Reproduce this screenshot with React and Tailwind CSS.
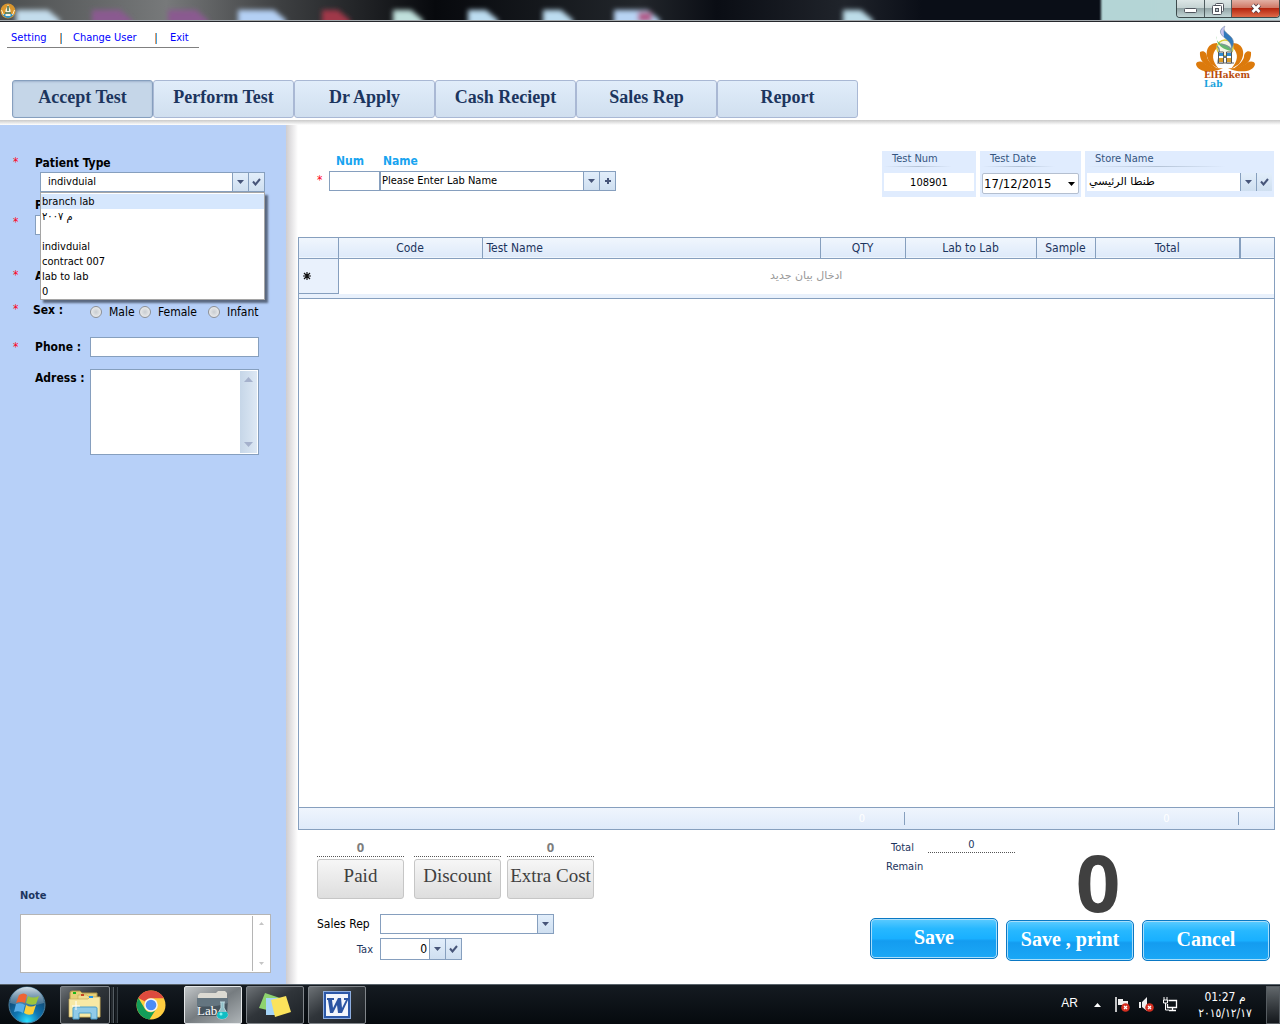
import React from "react";

const TABS = ["Accept Test", "Perform Test", "Dr Apply", "Cash Reciept", "Sales Rep", "Report"];
const PATIENT_TYPES = ["branch lab", "م ٢٠٠٧", "", "indivduial", "contract 007", "lab to lab", "0"];

function ArrowIcon() {
  return (
    <svg width="7" height="4" viewBox="0 0 7 4" aria-hidden="true">
      <path d="M0 0h7L3.5 4z" fill="#475579" />
    </svg>
  );
}

function CheckIcon() {
  return (
    <svg width="9" height="8" viewBox="0 0 9 8" aria-hidden="true">
      <path d="M1 3.5 3.5 6.5 8 1" fill="none" stroke="#475579" strokeWidth="2" />
    </svg>
  );
}

function PlusIcon() {
  return (
    <svg width="6" height="6" viewBox="0 0 6 6" aria-hidden="true">
      <path d="M2 0h2v2h2v2H4v2H2V4H0V2h2z" fill="#475579" />
    </svg>
  );
}

function SideButton({ label, children }) {
  return (
    <button
      type="button"
      aria-label={label}
      className="flex w-4 shrink-0 items-center justify-center border-l border-[#869fbe] bg-linear-to-b from-[#e2eefb] to-[#cfdff0]"
    >
      {children}
    </button>
  );
}

function Star() {
  return <span className="text-[12px] leading-[14px] text-[#ff0020]">*</span>;
}

function TitleBar() {
  const blobs = [
    [16, 44, "#c3dcec"],
    [92, 40, "#8a5a90"],
    [168, 40, "#8a5a90"],
    [238, 48, "#b4d0f4"],
    [322, 28, "#a03848"],
    [393, 30, "#c0e0dc"],
    [468, 30, "#bcdcf0"],
    [543, 30, "#bcdcf0"],
    [614, 46, "#b8d4f4"],
    [843, 30, "#bcdce8"],
  ];
  return (
    <div className="relative flex h-[22px] items-start justify-between overflow-hidden border-b border-[#26282c] bg-[#0b0f16]">
      <svg className="absolute inset-0 h-full w-full" aria-hidden="true">
        <defs>
          <linearGradient id="glass" x1="0" x2="1">
            <stop offset="0" stopColor="#4c4f50" />
            <stop offset="0.13" stopColor="#77797a" />
            <stop offset="0.22" stopColor="#3d3f41" />
            <stop offset="0.34" stopColor="#07090d" />
            <stop offset="0.5" stopColor="#22262b" />
            <stop offset="0.56" stopColor="#0a0d14" />
            <stop offset="0.66" stopColor="#20242b" />
            <stop offset="0.72" stopColor="#0a0e17" />
            <stop offset="1" stopColor="#0a0e17" />
          </linearGradient>
          <linearGradient id="aqua" x1="0" x2="1">
            <stop offset="0" stopColor="#b4d5d6" />
            <stop offset="1" stopColor="#c8dfdf" />
          </linearGradient>
          <filter id="soft" x="-5%" y="-100%" width="110%" height="300%">
            <feGaussianBlur stdDeviation="2.500" />
          </filter>
          <filter id="soft1">
            <feGaussianBlur stdDeviation="1" />
          </filter>
        </defs>
        <rect width="100%" height="22" fill="url(#glass)" />
        <g filter="url(#soft)">
          {blobs.map(([x, w, c]) => (
            <path key={x} d={`M${x} 10h${w - 12}l12 10v10H${x}z`} fill={c} />
          ))}
          <rect x="638" y="12" width="14" height="10" fill="#b05a8a" />
        </g>
        <rect x="1101" y="-4" width="100%" height="30" fill="url(#aqua)" filter="url(#soft1)" />
        <rect y="20" width="100%" height="1" fill="#a4aaae" />
      </svg>
      <svg className="relative mt-[3px]" width="16" height="16" viewBox="0 0 16 16" role="img" aria-label="ElHakem Lab">
        <circle cx="8" cy="8" r="7.500" fill="#d9962e" />
        <path d="M2 11q6 8 12 0z" fill="#2f93c8" />
        <path d="M8 1.500 5.500 7v6h5V7z" fill="#f4f1e0" />
        <path d="M8 3v5M5 10h6" stroke="#3a6a48" strokeWidth="1.500" />
        <path d="M1.500 7l2 5M14.500 7l-2 5" stroke="#fff0c8" />
      </svg>
      <div className="relative flex h-[18px] overflow-hidden rounded-b-[4px] border border-t-0 border-[#3c4a4c]">
        <button type="button" aria-label="Minimize" className="flex w-7 items-center justify-center border-r border-[#4f5d60] bg-[linear-gradient(#dce6e6,#c4d2d2_48%,#93a5a7_50%,#c3d6d6)]">
          <svg className="mt-1" width="13" height="5" viewBox="0 0 13 5"><rect x="0.500" y="0.500" width="12" height="4" rx="1" fill="#fff" stroke="#50555e" /></svg>
        </button>
        <button type="button" aria-label="Restore" className="flex w-[27px] items-center justify-center border-r border-[#4f5d60] bg-[linear-gradient(#dce6e6,#c4d2d2_48%,#93a5a7_50%,#c3d6d6)]">
          <svg width="13" height="12" viewBox="0 0 13 12">
            <rect x="3.500" y="0.500" width="8" height="8" rx="1" fill="#fff" stroke="#50555e" />
            <rect x="0.500" y="2.500" width="9" height="9" rx="1" fill="#fff" stroke="#50555e" />
            <rect x="3.500" y="5.500" width="3" height="3" fill="#b9c6c8" stroke="#50555e" />
          </svg>
        </button>
        <button type="button" aria-label="Close" className="flex w-[47px] items-center justify-center bg-[linear-gradient(#e2b0a4,#cf7562_48%,#b5260f_50%,#dd6a48)]">
          <svg width="12" height="11" viewBox="0 0 12 11">
            <path d="M2.500 2l7 7M9.500 2l-7 7" stroke="#5a4048" strokeWidth="4.500" />
            <path d="M2.500 2l7 7M9.500 2l-7 7" stroke="#fff" strokeWidth="2.600" />
          </svg>
        </button>
      </div>
    </div>
  );
}

function Logo() {
  return (
    <svg width="64" height="66" viewBox="0 0 64 66" role="img" aria-label="ElHakem Lab logo">
      <g fill="#dc7a0c">
        <path d="M23 20C13 20 9 31 17 41l8 5C18 38 17 31 23 25z" />
        <path d="M39 20c10 0 14 11 6 21l-8 5c7-8 8-15 2-21z" />
        <path d="M6 29c4-2 7 1 7 5 1 4 5 8 11 12C14 45 5 40 6 29z" />
        <path d="M57 29c-4-2-7 1-7 5-1 4-5 8-11 12 10-1 19-6 18-17z" />
        <path d="M2 41c1-3 5-3 8-1 5 4 10 6 19 5-9 5-26 5-27-4z" />
        <path d="M61 41c-1-3-5-3-8-1-5 4-10 6-19 5 9 5 26 5 27-4z" />
      </g>
      <path d="M23 40h17" stroke="#666" />
      <circle cx="31" cy="25" r="8" fill="#f6f5e4" stroke="#d9ce3a" strokeWidth="1.500" />
      <path d="M31 3c-8 5-4 9 1 13s6 7 5 11c4-7 3-11-2-15s-6-6-4-9z" fill="#3179bb" stroke="#85909f" strokeWidth="0.600" />
      <path d="M31 3c-6 4-5 8-1 11 0-4-1-7 1-11z" fill="#c6c2ed" />
      <path d="M23 13c-2 5 3 8 8 9s6 3 7 6c-8-1-17-6-15-15z" fill="#64b86d" />
      <path d="M23 23c3 2 3 8 1 16M27 21c6 1 10 3 11 8" fill="none" stroke="#7c9a94" strokeWidth="1.500" />
      <path d="M24.500 29h5v11h-5zM32.500 29h5v11h-5z" fill="#fff" stroke="#555" />
      <path d="M25 30h4v3h-4zM33 30h4v3h-4z" fill="#2d8bd0" />
      <path d="M25 35h4v4h-4zM33 35h4v4h-4z" fill="#d99b28" />
      <path d="M29 34h4" stroke="#68707a" strokeWidth="2" />
      <text x="10" y="55" fontSize="9" fontWeight="bold" fill="#b94b0a" fontFamily="DejaVu Serif, serif">ElHakem</text>
      <text x="10" y="64" fontSize="9" fontWeight="bold" fill="#18a2dc" fontFamily="DejaVu Serif, serif">Lab</text>
    </svg>
  );
}

function Header() {
  return (
    <header className="flex shrink-0 flex-col bg-white">
      <div className="flex items-start justify-between pr-[22px] pb-[2px] pl-[7px]">
        <div>
          <nav className="mt-2 flex h-[18px] w-[192px] items-center border-b border-[#808080] pl-1 text-[11px] text-[#0000ff]">
            <a href="#setting" className="w-[49px]">Setting</a>
            <span className="h-[11px] w-[2px] border-l border-[#e69a64] bg-[#4aa3dd]" />
            <a href="#user" className="ml-[11px] w-[82px] whitespace-nowrap">Change User</a>
            <span className="h-[11px] w-[2px] border-l border-[#e69a64] bg-[#4aa3dd]" />
            <a href="#exit" className="ml-[13px]">Exit</a>
          </nav>
          <div className="mt-8 ml-[5px] flex">
            {TABS.map((t, i) => (
              <button
                key={t}
                type="button"
                className={
                  "h-[38px] w-[141px] rounded-[3px] border pb-1 font-['Liberation_Serif',serif] text-[18px] font-bold text-[#1c355e] " +
                  (i === 0
                    ? "border-[#869fbe] bg-[#c5d6e8] shadow-[inset_0_1px_2px_#9fb4cd]"
                    : "border-[#a9b8d4] bg-linear-to-b from-[#e1edfa] to-[#d0dfef]")
                }
              >
                {t}
              </button>
            ))}
          </div>
        </div>
        <div className="mt-px">
          <Logo />
        </div>
      </div>
      <div className="h-[5px] bg-linear-to-b from-[#cacaca] to-white" />
    </header>
  );
}

function Sidebar() {
  return (
    <aside className="flex w-[286px] shrink-0 flex-col bg-[#b7d0f8] pb-[11px] text-[12px] text-black">
      <div className="mt-[30px] grid grid-cols-[22px_1fr] pl-[13px]">
        <Star />
        <label htmlFor="ptype" className="leading-4 font-bold">Patient Type</label>
      </div>
      <div className="relative mt-px ml-10 w-[225px]">
        <div className="flex h-5 border border-[#869fbe] bg-white">
          <select id="ptype" defaultValue="indivduial" className="min-w-0 flex-1 appearance-none pl-[7px] text-[11px] outline-none">
            {PATIENT_TYPES.map((p) => (
              <option key={p}>{p}</option>
            ))}
          </select>
          <SideButton label="Open patient types"><ArrowIcon /></SideButton>
          <SideButton label="Confirm patient type"><CheckIcon /></SideButton>
        </div>
        <ul role="listbox" aria-label="Patient types" className="absolute top-5 left-0 z-10 w-full border border-[#a5a5a5] bg-white pt-px text-[11px] shadow-[3px_3px_2px_#5a6880]">
          {PATIENT_TYPES.map((p, i) => (
            <li key={p} role="option" aria-selected={i === 0} className={"h-[15px] px-px leading-[15px] " + (i === 0 ? "bg-[#d6e7fd]" : "")}>
              {p}
            </li>
          ))}
        </ul>
      </div>
      <label htmlFor="pname" aria-label="Patient" className="mt-[5px] ml-[35px] w-[5px] overflow-hidden leading-4 font-bold">P</label>
      <div className="mt-[2px] grid grid-cols-[22px_200px] pl-[13px]">
        <Star />
        <input id="pname" className="h-5 border border-[#869fbe] bg-white" />
      </div>
      <div className="mt-[33px] grid grid-cols-[22px_5px] pl-[13px]">
        <Star />
        <span className="overflow-hidden leading-4 font-bold">A</span>
      </div>
      <fieldset className="mt-[18px] grid grid-cols-[20px_57px_49px_69px_1fr] pl-[13px] leading-4">
        <Star />
        <span className="font-bold">Sex :</span>
        {["Male", "Female", "Infant"].map((s) => (
          <label key={s} className="flex items-center gap-[7px] pt-[2px]">
            <input type="radio" name="sex" className="size-3 shrink-0 appearance-none rounded-full border border-[#8d9095] bg-radial from-[#c8ccd0] to-[#f6f6f6]" />
            {s}
          </label>
        ))}
      </fieldset>
      <div className="mt-[17px] grid grid-cols-[22px_55px_169px] items-center pl-[13px]">
        <Star />
        <label htmlFor="phone" className="font-bold whitespace-nowrap">Phone :</label>
        <input id="phone" className="h-5 border border-[#869fbe] bg-white" />
      </div>
      <div className="mt-3 grid grid-cols-[55px_169px] pl-[35px]">
        <label htmlFor="adress" className="font-bold whitespace-nowrap">Adress :</label>
        <div className="flex h-[86px] border border-[#869fbe] bg-white p-px">
          <textarea id="adress" className="min-w-0 flex-1 resize-none outline-none" />
          <div className="flex w-[17px] flex-col items-center justify-between bg-linear-to-r from-[#c6d6e8] to-[#dde8f4] py-[6px]">
            <svg width="9" height="5" viewBox="0 0 9 5"><path d="M4.500 0 9 5H0z" fill="#a5b1cc" /></svg>
            <svg width="9" height="5" viewBox="0 0 9 5"><path d="M0 0h9L4.500 5z" fill="#a5b1cc" /></svg>
          </div>
        </div>
      </div>
      <div className="mt-auto ml-5 w-[251px]">
        <label htmlFor="note" className="block text-[11px] leading-4 font-bold text-[#1c355e]">Note</label>
        <div className="mt-[10px] flex h-[59px] border border-[#b5b5b5] bg-white py-px">
          <textarea id="note" className="min-w-0 flex-1 resize-none outline-none" />
          <div className="flex w-[18px] flex-col items-center justify-between border-l border-[#b5b5b5] py-[6px]">
            <svg width="5" height="3" viewBox="0 0 5 3"><path d="M2.500 0 5 3H0z" fill="#c5c5c5" /></svg>
            <svg width="5" height="3" viewBox="0 0 5 3"><path d="M0 0h5L2.500 3z" fill="#c5c5c5" /></svg>
          </div>
        </div>
      </div>
    </aside>
  );
}

function InfoPanel({ id, label, className, children }) {
  return (
    <div className={"h-[46px] bg-[#e0ecfe] px-[2px] " + className}>
      <label htmlFor={id} className="block h-[15px] pl-2 text-[11px] leading-[15px] text-[#35557f]">{label}</label>
      <div className="mb-[6px] h-px w-3/4 bg-linear-to-r from-transparent via-[#b4c3d6] to-transparent" />
      {children}
    </div>
  );
}

function TopForm() {
  return (
    <div className="flex items-start justify-between pr-px">
      <div className="grid grid-cols-[12px_51px_236px] pt-[2px] pl-[19px] text-[11px]">
        <span />
        <label htmlFor="labnum" className="pl-[7px] text-[12px] leading-4 font-bold text-[#18a4f0]">Num</label>
        <label htmlFor="labname" className="pl-[3px] text-[12px] leading-4 font-bold text-[#18a4f0]">Name</label>
        <span className="pt-1"><Star /></span>
        <input id="labnum" className="mt-[2px] h-5 min-w-0 border border-[#869fbe] bg-white" />
        <div className="mt-[2px] flex h-5 border border-[#869fbe] bg-white">
          <select id="labname" className="min-w-0 flex-1 appearance-none pl-px outline-none">
            <option>Please Enter Lab Name</option>
          </select>
          <SideButton label="Open lab names"><ArrowIcon /></SideButton>
          <SideButton label="Add lab"><PlusIcon /></SideButton>
        </div>
      </div>
      <div className="flex gap-1 text-[11px]">
        <InfoPanel id="testnum" label="Test Num" className="w-[94px]">
          <input id="testnum" defaultValue="108901" className="h-[18px] w-full bg-white text-center" />
        </InfoPanel>
        <InfoPanel id="testdate" label="Test Date" className="w-[101px]">
          <div className="flex h-[21px] items-center rounded-[2px] border border-[#b4bfd0] bg-white pr-[3px]">
            <input id="testdate" defaultValue="17/12/2015" className="min-w-0 flex-1 pl-px text-[13px] outline-none" />
            <svg width="7" height="4" viewBox="0 0 7 4" aria-hidden="true"><path d="M0 0h7L3.500 4z" fill="#000" /></svg>
          </div>
        </InfoPanel>
        <InfoPanel id="store" label="Store Name" className="w-[189px]">
          <div className="flex h-[18px]">
            <select id="store" className="min-w-0 flex-1 appearance-none bg-white pl-[2px] font-['DejaVu_Sans',sans-serif] outline-none">
              <option>طنطا الرئيسي</option>
            </select>
            <SideButton label="Open stores"><ArrowIcon /></SideButton>
            <SideButton label="Confirm store"><CheckIcon /></SideButton>
          </div>
        </InfoPanel>
      </div>
    </div>
  );
}

function TestGrid() {
  const th = "border-r border-[#869fbe] p-0 font-normal leading-[18px]";
  return (
    <div className="mt-10 flex flex-1 flex-col border border-[#869fbe] bg-white">
      <table className="w-full table-fixed border-collapse text-[12px] text-[#1c355e]">
        <colgroup>
          <col className="w-[39px]" />
          <col className="w-36" />
          <col />
          <col className="w-[85px]" />
          <col className="w-[131px]" />
          <col className="w-[59px]" />
          <col className="w-[145px]" />
          <col className="w-[34px]" />
        </colgroup>
        <thead>
          <tr className="h-5 border-b border-[#869fbe] bg-linear-to-b from-[#f0f6fd] to-[#deeafa]">
            <th className={th} />
            <th className={th}>Code</th>
            <th className="border-r border-[#869fbe] py-0 pr-0 pl-1 text-left leading-[18px] font-normal">Test Name</th>
            <th className={th}>QTY</th>
            <th className={th}>Lab to Lab</th>
            <th className={th}>Sample</th>
            <th className="border-r-2 border-[#869fbe] p-0 font-normal">Total</th>
            <th />
          </tr>
        </thead>
        <tbody>
          <tr className="h-[35px]">
            <td className="border-r border-b border-[#869fbe] bg-[#e9f1fc] pl-1">
              <svg width="8" height="8" viewBox="0 0 8 8" aria-label="New row">
                <path d="M4 0v8M0 4h8M1 1l6 6M7 1 1 7" stroke="#111" strokeWidth="1.200" />
              </svg>
            </td>
            <td colSpan={7} className="p-0 text-center font-['DejaVu_Sans',sans-serif] text-[11px] text-[#999]">
              ادخال بيان جديد
            </td>
          </tr>
        </tbody>
      </table>
      <div className="h-[5px] border-b border-[#869fbe] bg-[#e9f1fc]" />
      <div className="flex-1" />
      <div className="flex h-[22px] items-center border-t border-[#869fbe] bg-linear-to-b from-[#eff5fd] to-[#dfeafa] text-[11px] text-white">
        <span className="flex-1" />
        <span className="h-[13px] w-[85px] border-r border-[#869fbe] text-center leading-[13px]">0</span>
        <span className="w-[190px]" />
        <span className="h-[13px] w-[144px] border-r border-[#869fbe] text-center leading-[13px]">0</span>
        <span className="w-[35px]" />
      </div>
    </div>
  );
}

function CostBox({ label, value, className }) {
  return (
    <div className={"w-[87px] " + className}>
      <div className="h-[18px] border-b border-dotted border-[#555] text-center font-['Open_Sans',sans-serif] text-[13px] leading-4 font-bold text-[#7d7d7d]">{value}</div>
      <button type="button" className="mt-[2px] h-10 w-full rounded-[3px] border border-[#c6c6c6] bg-linear-to-b from-[#f6f6f6] to-[#dedede] pb-[5px] font-['Liberation_Serif',serif] text-[19px] whitespace-nowrap text-[#404040]">
        {label}
      </button>
    </div>
  );
}

function BlueButton({ children, className }) {
  return (
    <button
      type="button"
      className={
        "h-[41px] w-32 rounded-[5px] border border-[#0a78c4] bg-[linear-gradient(#5ccbff,#27b8ff_25%,#19b0ff_50%,#149cf0_56%,#1ba8f6)] pb-1 font-['Liberation_Serif',serif] text-[20px] font-bold text-white shadow-[inset_0_0_0_1px_#a8defb] " +
        className
      }
    >
      {children}
    </button>
  );
}

function Summary() {
  return (
    <div className="flex h-[154px] shrink-0 justify-between pr-[5px] pl-[19px]">
      <div className="pt-[9px]">
        <div className="flex">
          <CostBox label="Paid" value="0" className="mr-[10px]" />
          <CostBox label="Discount" value="" className="mr-[6px]" />
          <CostBox label="Extra Cost" value="0" className="" />
        </div>
        <div className="mt-[15px] grid grid-cols-[63px_1fr] items-center gap-y-1 text-[12px]">
          <label htmlFor="rep" className="whitespace-nowrap">Sales Rep</label>
          <div className="flex h-5 w-[174px] border border-[#869fbe] bg-white">
            <select id="rep" className="min-w-0 flex-1 appearance-none outline-none"><option></option></select>
            <SideButton label="Open sales reps"><ArrowIcon /></SideButton>
          </div>
          <label htmlFor="tax" className="pt-[2px] pr-[7px] text-right text-[11px] text-[#1c355e]">Tax</label>
          <div className="flex h-[22px] w-[82px] border border-[#869fbe] bg-white">
            <input id="tax" defaultValue="0" className="min-w-0 flex-1 pr-[2px] text-right outline-none" />
            <SideButton label="Open tax rates"><ArrowIcon /></SideButton>
            <SideButton label="Confirm tax"><CheckIcon /></SideButton>
          </div>
        </div>
      </div>
      <div className="flex w-[400px] flex-col">
        <div className="flex h-[88px] pl-4 text-[11px] text-[#1c355e]">
          <div className="grid grid-cols-[42px_87px] content-start pt-[6px]">
            <span className="pt-1 pl-[5px] leading-4">Total</span>
            <span className="h-[17px] border-b border-dotted border-[#555] text-center leading-[17px]">0</span>
            <span className="pt-[3px] leading-4">Remain</span>
          </div>
          <div className="ml-[55px] w-14 pt-[14px] text-center font-['Open_Sans',sans-serif] text-[78px] leading-[76px] font-bold text-[#404040]">0</div>
        </div>
        <div className="flex gap-2">
          <BlueButton className="">Save</BlueButton>
          <BlueButton className="mt-[2px]">Save , print</BlueButton>
          <BlueButton className="mt-[2px]">Cancel</BlueButton>
        </div>
      </div>
    </div>
  );
}

function TaskButton({ label, className, children }) {
  return (
    <button
      type="button"
      aria-label={label}
      className={"flex h-[38px] items-center justify-center rounded-[2px] border " + className}
    >
      {children}
    </button>
  );
}

function Taskbar() {
  const idle = "border-[#80858a] bg-linear-to-br from-[#6d7276] via-[#30353a] via-45% to-[#1b2025]";
  return (
    <footer className="flex h-10 shrink-0 items-center justify-between border-t border-[#59636b] bg-linear-to-b from-[#151b21] to-[#060a0e] text-white">
      <div className="flex items-center">
        <button type="button" aria-label="Start" className="ml-2">
          <svg width="38" height="38" viewBox="0 0 38 38">
            <defs>
              <radialGradient id="orb" cx="0.5" cy="0.95" r="0.85">
                <stop offset="0" stopColor="#2be0ff" />
                <stop offset="0.4" stopColor="#0f77b4" />
                <stop offset="1" stopColor="#12395f" />
              </radialGradient>
              <linearGradient id="orbTop" x2="0" y2="1">
                <stop offset="0" stopColor="#d3dfe8" />
                <stop offset="1" stopColor="#56809d" stopOpacity="0.600" />
              </linearGradient>
            </defs>
            <circle cx="19" cy="19" r="18" fill="url(#orb)" stroke="#4c809f" />
            <path d="M2 17a17 16 0 0 1 34 0q-17 6-34 0z" fill="url(#orbTop)" />
            <path d="M11 9q5-3 8 0l-2 8q-4-2-9 0z" fill="#ee6432" />
            <path d="M20 10q5 3 11 0l-3 8q-5 2-10-1z" fill="#9dc53c" />
            <path d="M8 18q5-2 9 1l-2 8q-4-3-9-1z" fill="#58aee8" />
            <path d="M18 19q5 3 10 0l-3 9q-5 2-9-1z" fill="#fbd03b" />
          </svg>
        </button>
        <TaskButton label="Windows Explorer" className={"ml-[14px] w-[50px] " + idle}>
          <svg width="34" height="30" viewBox="0 0 34 30">
            <path d="M2 3q0-2 2-2h8l2 2h15v22H2z" fill="#e5cf78" stroke="#ad9344" />
            <path d="M10 5h9l2 2h11v20H10z" fill="#efdc91" stroke="#b99e4b" strokeWidth="0.500" />
            <path d="M1 9h19l2-2h10v20H1z" fill="#f8e9a5" stroke="#c4aa5a" strokeWidth="0.700" />
            <path d="M5 2h3v2H5z" fill="#18b81c" /><path d="M13 4h3v2h-3z" fill="#c84423" /><path d="M21 6h4v2h-4z" fill="#1e92e8" />
            <path d="M5 29V18q0-1 2-1h20q2 0 2 1v11h-6v-6H11v6z" fill="#91cbe8" stroke="#4c9fcb" />
            <path d="M8 11v9M4 16h8" stroke="#fff" />
          </svg>
        </TaskButton>
        <span className="ml-px h-9 w-[3px] border-r border-[#555d63] bg-[#252a2f]" />
        <span className="ml-px h-9 w-[3px] border-r border-[#3b4349] bg-[#181d22]" />
        <button type="button" aria-label="Google Chrome" className="ml-[18px]">
          <svg width="30" height="30" viewBox="0 0 30 30">
            <circle cx="15" cy="15" r="14.500" fill="#ffcd40" />
            <path d="M2.300 8A14.600 14.600 0 0 1 27.900 8.300H15a7 7 0 0 0-6 3.300z" fill="#dd4b3e" />
            <path d="M2.400 8A14.500 14.500 0 0 0 13.500 29.400L19.500 20l-3 2A7 7 0 0 1 9 19z" fill="#139d59" />
            <circle cx="15" cy="15" r="6.800" fill="#f4f4f4" /><circle cx="15" cy="15" r="5.300" fill="#4c8bf5" />
          </svg>
        </button>
        <TaskButton label="Lab" className="ml-[18px] w-[58px] border-[#e5e8ea] bg-linear-to-br from-[#c2c6c8] via-[#767c80] via-50% to-[#aeb4b7]">
          <svg width="32" height="30" viewBox="0 0 32 30">
            <path d="M1 5l2-2h16l2-2h7l2 2v8H1z" fill="#dcdad2" />
            <path d="M0 8h31l-1 18H2z" fill="#47555f" />
            <path d="M0 8h31v5q-14 5-31 3z" fill="#647580" />
            <path d="M23 12h5M24 12v6l-4 7q0 4 5 4t6-4l-4-7v-6" fill="#8fbfc8" stroke="#bcdae0" />
            <path d="M21 22h9l1 3q-1 4-6 4t-5-4z" fill="#10bdc3" /><circle cx="24" cy="24" r="1.500" fill="#7ff6f4" />
            <text x="0" y="25" fontSize="13" fill="#fff" fontFamily="Liberation Serif, serif">Lab</text>
          </svg>
        </TaskButton>
        <TaskButton label="Sticky Notes" className={"ml-1 w-[58px] " + idle}>
          <svg width="34" height="28" viewBox="0 0 34 28">
            <path d="M7 2l15 5-5 14L1 17z" fill="#8ed36f" />
            <path d="M8 7h14v17H8z" fill="#a5d4f7" />
            <path d="M13 9l15-4 5 16-16 5z" fill="#fbe35b" />
          </svg>
        </TaskButton>
        <TaskButton label="Microsoft Word" className={"ml-1 w-[58px] " + idle}>
          <svg width="28" height="28" viewBox="0 0 28 28">
            <rect x="0.500" y="0.500" width="27" height="27" fill="#2c58a8" stroke="#8eaee0" />
            <rect x="3" y="3" width="22" height="22" fill="#f2f6fc" />
            <path d="M4 7h7v2H9l1 8 5-10h3l1 10 4-8h-2V7h5v2h-1l-6 13h-4l-1-8-4 8H7L5 9H4z" fill="#2c55a2" />
          </svg>
        </TaskButton>
      </div>
      <div className="flex items-center">
        <span className="pb-[3px] font-['Liberation_Sans',sans-serif] text-[12px]">AR</span>
        <button type="button" aria-label="Show hidden icons" className="ml-4">
          <svg width="7" height="4" viewBox="0 0 7 4"><path d="M3.500 0 7 4H0z" fill="#fff" /></svg>
        </button>
        <svg className="ml-[14px]" width="15" height="15" viewBox="0 0 15 15" role="img" aria-label="Action Center">
          <path d="M1 0v15" stroke="#fff" strokeWidth="1.500" />
          <path d="M3 2h5v2h5v6H8V8H3z" fill="#eee" />
          <circle cx="10.500" cy="10.500" r="4.300" fill="#d22e20" />
          <path d="M9 9l3 3M12 9l-3 3" stroke="#fff" strokeWidth="1.300" />
        </svg>
        <svg className="ml-[9px]" width="15" height="15" viewBox="0 0 15 15" role="img" aria-label="Volume muted">
          <path d="M0 5h2v6H0zM3 5l5-5v14l-5-4z" fill="#eee" />
          <circle cx="10.500" cy="10.500" r="4.300" fill="#d22e20" />
          <path d="M9 9l3 3M12 9l-3 3" stroke="#fff" strokeWidth="1.300" />
        </svg>
        <svg className="ml-[9px]" width="15" height="15" viewBox="0 0 15 15" role="img" aria-label="Network">
          <path d="M1 0v3M4 0v3M0.500 3h4v3h-4zM2.500 6v7H6" fill="none" stroke="#fff" />
          <path d="M5.500 3.500h8v7H4.500V7M9.500 11v2M6 13.500h7" fill="none" stroke="#fff" strokeWidth="1.300" />
        </svg>
        <div className="ml-[15px] w-[64px] text-center text-[12px] leading-4">
          <div>01:27 م</div>
          <div>٢٠١٥/١٢/١٧</div>
        </div>
        <button type="button" aria-label="Show desktop" className="ml-[9px] h-[38px] w-[14px] border border-[#565c61] bg-linear-to-b from-[#62686c] to-[#14181c]" />
      </div>
    </footer>
  );
}

export default function App() {
  return (
    <div className="flex min-h-screen flex-col bg-white font-['DejaVu_Sans_Condensed','DejaVu_Sans',sans-serif]">
      <TitleBar />
      <Header />
      <div className="flex flex-1">
        <Sidebar />
        <div className="w-3 shrink-0 bg-linear-to-r from-[#cfcdd0] to-white" />
        <main className="flex min-w-0 flex-1 flex-col pt-[26px] pr-[5px]">
          <TopForm />
          <TestGrid />
          <Summary />
        </main>
      </div>
      <Taskbar />
    </div>
  );
}
